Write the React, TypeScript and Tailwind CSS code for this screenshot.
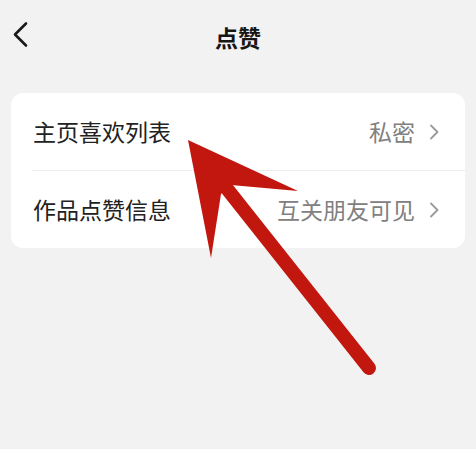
import React from "react";

const Chevron = () => (
  <svg width="10" height="16" viewBox="0 0 10 16" className="ml-[14px]">
    <path d="M2 1.5 L8.5 8 L2 14.5" fill="none" stroke="#9a9a9a" strokeWidth="1.8" strokeLinecap="round" strokeLinejoin="round" />
  </svg>
);

export default function App() {
  return (
    <div
      className="relative w-[476px] h-[449px] bg-[#f2f2f2] overflow-hidden"
      style={{ fontFamily: '"Noto Sans CJK SC", "Noto Sans", sans-serif' }}
    >
      <div className="relative h-[74px] flex items-center justify-center">
        <svg width="20" height="28" viewBox="0 0 20 28" className="absolute left-[10px] top-[21px]">
          <path d="M16 2.5 L5 13.5 L16 24.5" fill="none" stroke="#1a1a1a" strokeWidth="2.6" strokeLinecap="round" strokeLinejoin="round" />
        </svg>
        <span className="text-[23px] font-bold text-[#161616] tracking-[0px]">点赞</span>
      </div>
      <div className="mx-[11px] mt-[19px] bg-white rounded-[12px]">
        <div className="h-[77px] flex items-center pl-[22px] pr-[26px]">
          <span className="text-[23px] text-[#222] leading-none">主页喜欢列表</span>
          <span className="ml-auto text-[23px] text-[#808080] leading-none">私密</span>
          <Chevron />
        </div>
        <div className="ml-[21px] h-px bg-[#ececec]" />
        <div className="h-[77px] flex items-center pl-[22px] pr-[26px]">
          <span className="text-[23px] text-[#222] leading-none">作品点赞信息</span>
          <span className="ml-auto text-[23px] text-[#808080] leading-none">互关朋友可见</span>
          <Chevron />
        </div>
      </div>
      <svg className="absolute left-0 top-0" width="476" height="449" viewBox="0 0 476 449">
        <line x1="228" y1="190" x2="369" y2="368" stroke="#c2170f" strokeWidth="14" strokeLinecap="round" />
        <polygon points="188,140 298,191 231,185 221,194 211,258" fill="#c2170f" />
      </svg>
    </div>
  );
}
